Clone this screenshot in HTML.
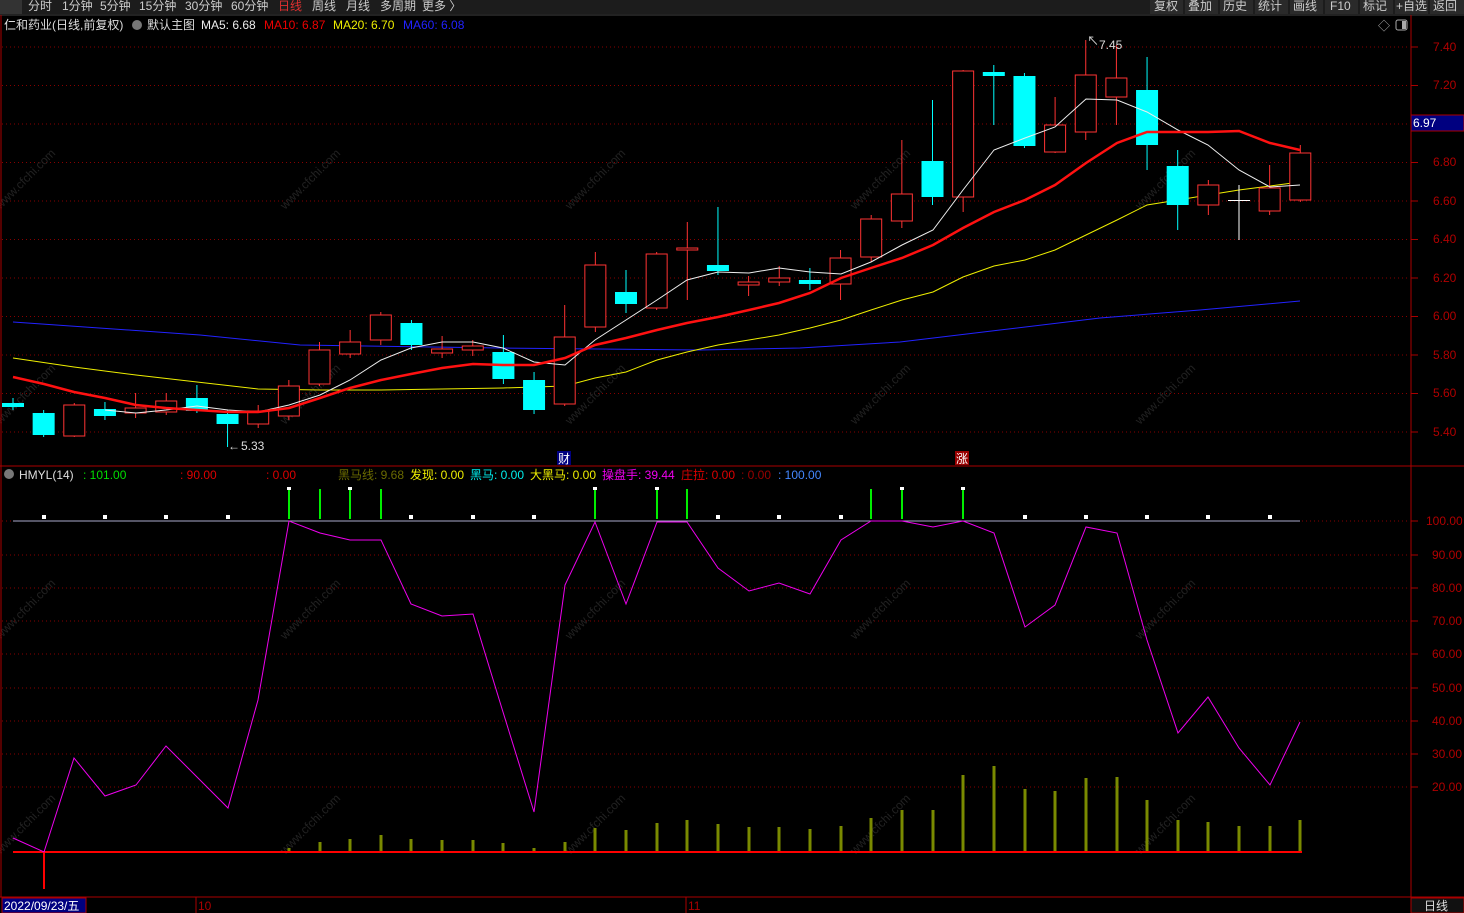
<!DOCTYPE html>
<html><head><meta charset="utf-8">
<style>
html,body{margin:0;padding:0;background:#000;width:1464px;height:913px;overflow:hidden;font-family:"Liberation Sans","Noto Sans CJK SC",sans-serif;}
svg{position:absolute;left:0;top:0;overflow:hidden}
text{font-family:"Liberation Sans","Noto Sans CJK SC",sans-serif;font-size:12px}
</style></head><body>
<svg id="s" width="1464" height="913" viewBox="0 0 1464 913" xmlns="http://www.w3.org/2000/svg">
<rect x="0" y="0" width="1464" height="14" fill="#1c1c1c"/>
<rect x="0" y="0" width="22" height="14" fill="#333"/>
<text x="28" y="10" fill="#ccc">分时</text><text x="62" y="10" fill="#ccc">1分钟</text><text x="100" y="10" fill="#ccc">5分钟</text><text x="139" y="10" fill="#ccc">15分钟</text><text x="185" y="10" fill="#ccc">30分钟</text><text x="231" y="10" fill="#ccc">60分钟</text><text x="278" y="10" fill="#e03030">日线</text><text x="312" y="10" fill="#ccc">周线</text><text x="346" y="10" fill="#ccc">月线</text><text x="380" y="10" fill="#ccc">多周期</text><text x="422" y="10" fill="#ccc">更多 〉</text>
<g fill="#2a2a2a"><rect x="1150" y="0" width="33" height="14"/><rect x="1185" y="0" width="33" height="14"/><rect x="1220" y="0" width="33" height="14"/><rect x="1255" y="0" width="33" height="14"/><rect x="1290" y="0" width="33" height="14"/><rect x="1325" y="0" width="33" height="14"/><rect x="1360" y="0" width="33" height="14"/><rect x="1395" y="0" width="33" height="14"/><rect x="1430" y="0" width="34" height="14"/></g>
<text x="1154" y="10" fill="#ccc">复权</text><text x="1188" y="10" fill="#ccc">叠加</text><text x="1223" y="10" fill="#ccc">历史</text><text x="1258" y="10" fill="#ccc">统计</text><text x="1293" y="10" fill="#ccc">画线</text><text x="1330" y="10" fill="#ccc">F10</text><text x="1363" y="10" fill="#ccc">标记</text><text x="1396" y="10" fill="#ccc">+自选</text><text x="1433" y="10" fill="#ccc">返回</text>
<line x1="0" y1="15" x2="1464" y2="15" stroke="#444"/>
<text x="4" y="29" fill="#ddd">仁和药业(日线,前复权)</text>
<circle cx="137" cy="25" r="5" fill="#777"/>
<text x="147" y="29" fill="#ddd">默认主图</text>
<text x="201" y="29" fill="#eee">MA5: 6.68</text>
<text x="264" y="29" fill="#e00">MA10: 6.87</text>
<text x="333" y="29" fill="#ee0">MA20: 6.70</text>
<text x="403" y="29" fill="#22f">MA60: 6.08</text>
<text x="1378" y="30" fill="#aaa">◇</text>
<rect x="1396" y="20" width="11" height="10" rx="2" fill="none" stroke="#aaa"/><rect x="1402" y="21" width="4" height="8" fill="#aaa"/>
<g id="grid"></g>
<g id="wm" fill="#222"></g>
<line x1="1411" y1="15" x2="1411" y2="897" stroke="#a00"/>
<line x1="0" y1="466" x2="1464" y2="466" stroke="#a00"/>
<line x1="1" y1="15" x2="1" y2="897" stroke="#a00"/>
<g id="main"></g>
<rect x="1411" y="115" width="53" height="16" fill="#000080" stroke="#a00"/>
<text x="1413" y="127" fill="#fff">6.97</text>
<text x="1099" y="49" fill="#ddd">7.45</text><text x="1087" y="45" fill="#ddd">↖</text>
<text x="241" y="450" fill="#ddd">5.33</text><text x="228" y="450" fill="#ddd">←</text>
<rect x="557" y="451" width="14" height="14" fill="#000080"/><text x="558" y="463" fill="#fff">财</text>
<rect x="955" y="451" width="14" height="14" fill="#900"/><text x="956" y="463" fill="#fff">涨</text>
<circle cx="9" cy="474" r="5" fill="#777"/>
<text x="19" y="479" fill="#ddd">HMYL(14)</text>
<text x="83" y="479" fill="#0d0">: 101.00</text>
<text x="180" y="479" fill="#d00">: 90.00</text>
<text x="266" y="479" fill="#d00">: 0.00</text>
<text x="338" y="479" fill="#6a6a00">黑马线: 9.68</text>
<text x="410" y="479" fill="#ee0">发现: 0.00</text>
<text x="470" y="479" fill="#0ee">黑马: 0.00</text>
<text x="530" y="479" fill="#ee0">大黑马: 0.00</text>
<text x="602" y="479" fill="#e0e">操盘手: 39.44</text>
<text x="681" y="479" fill="#d00">庄拉: 0.00</text>
<text x="741" y="479" fill="#900">: 0.00</text>
<text x="778" y="479" fill="#48f">: 100.00</text>
<g id="ind"></g>
<rect x="0" y="897" width="1464" height="16" fill="#000"/>
<line x1="0" y1="897" x2="1464" y2="897" stroke="#a00"/>
<rect x="2" y="898" width="84" height="15" fill="#000080" stroke="#a00"/>
<text x="4" y="910" fill="#fff">2022/09/23/五</text>
<line x1="196" y1="897" x2="196" y2="913" stroke="#a00"/><text x="198" y="910" fill="#a00">10</text>
<line x1="686" y1="897" x2="686" y2="913" stroke="#a00"/><text x="688" y="910" fill="#a00">11</text>
<rect x="1411" y="898" width="53" height="15" fill="#111" stroke="#a00"/><text x="1424" y="910" fill="#ddd">日线</text>
<g id="lbl" fill="#b00000">
<text x="1433" y="51">7.40</text><text x="1433" y="89">7.20</text><text x="1433" y="166">6.80</text><text x="1433" y="205">6.60</text><text x="1433" y="243">6.40</text><text x="1433" y="282">6.20</text><text x="1433" y="320">6.00</text><text x="1433" y="359">5.80</text><text x="1433" y="397">5.60</text><text x="1433" y="436">5.40</text>
<text x="1426" y="525">100.00</text><text x="1432" y="559">90.00</text><text x="1432" y="592">80.00</text><text x="1432" y="625">70.00</text><text x="1432" y="658">60.00</text><text x="1432" y="692">50.00</text><text x="1432" y="725">40.00</text><text x="1432" y="758">30.00</text><text x="1432" y="791">20.00</text>
</g>
</svg>
<script>
const NS="http://www.w3.org/2000/svg";
function el(p,t,a){const e=document.createElementNS(NS,t);for(const k in a)e.setAttribute(k,a[k]);document.getElementById(p).appendChild(e);return e;}
const grid=[47,85.5,124,162.5,201,239.5,278,316.5,355,393.5,432,521,555,588,621,654,688,721,754,787];
grid.forEach(y=>{el("grid","line",{x1:2,y1:y,x2:1410,y2:y,stroke:"#800",'stroke-dasharray':"1 3"});el("grid","line",{x1:1411,y1:y,x2:1418,y2:y,stroke:"#a00"});});
for(let gx=0;gx<1420;gx+=285)for(let gy=210;gy<900;gy+=215){const t=el("wm","text",{x:gx,y:gy,transform:`rotate(-45 ${gx} ${gy})`,'font-size':24});t.textContent="www.cfchi.com";}
const X=i=>13+i*30.65;
const C=[["c",403,407,398,410],["c",413,435,410,437],["r",405,436,403,437],["c",409,416,402,420],["r",408,413,393,418],["r",401,412,393,415],["c",398,411,385,413],["c",414,424,410,447],["r",411,424,405,428],["r",386,416,380,420],["r",350,384,342,386],["r",342,354,330,358],["r",315,340,312,345],["c",323,345,320,350],["r",349,353,336,358],["r",346,350,340,356],["c",352,379,335,384],["c",380,410,372,414],["r",337,404,305,406],["r",265,327,252,332],["c",292,304,270,313],["r",254,308,252,310],["r",248,250,222,300],["c",265,271,207,275],["r",282,285,276,296],["r",278,282,266,286],["c",280,284,268,290],["r",258,284,250,300],["r",219,257,215,262],["r",194,221,140,228],["c",161,197,100,205],["r",71,197,70,212],["c",72,76,65,125],["c",76,146,73,148],["r",125,152,97,153],["r",75,132,40,140],["r",78,97,45,125],["c",90,145,57,170],["c",166,205,150,230],["r",185,205,180,215],["w",200,201,185,240],["r",188,211,165,215],["r",153,200,145,202]];
function pl(id,pts,col,w){el(id,"polyline",{points:pts.map(p=>p.join(",")).join(" "),fill:"none",stroke:col,'stroke-width':w});}
pl("main",[[13,322],[200,335],[300,345],[500,348],[700,350],[800,348],[900,342],[1000,330],[1100,318],[1200,310],[1300,301]],"#22f",1);
pl("main",[[13,358],[74,367],[136,375],[197,382],[258,389],[320,390],[381,390],[442,389],[503,388],[565,386],[595,378],[626,372],[657,360],[687,352],[718,345],[749,340],[779,335],[810,328],[841,320],[871,310],[902,300],[933,292],[963,277],[994,266],[1025,260],[1055,250],[1086,235],[1117,220],[1147,205],[1178,200],[1208,195],[1239,190],[1270,186],[1300,182]],"#ee0",1);
C.forEach((c,i)=>{const x=X(i),col=c[0]=="r"?"#f33":c[0]=="c"?"#0ff":"#fff";
el("main","line",{x1:x,y1:c[3],x2:x,y2:c[1],stroke:col});el("main","line",{x1:x,y1:c[2],x2:x,y2:c[4],stroke:col});
if(c[0]=="r")el("main","rect",{x:x-10.5,y:c[1],width:21,height:Math.max(1,c[2]-c[1]),fill:"#000",stroke:col});
else el("main","rect",{x:x-11,y:c[1],width:22,height:Math.max(1,c[2]-c[1]),fill:col});});
pl("main",[[105,410],[136,413],[166,410],[197,406],[228,410],[258,412],[289,405],[320,395],[350,380],[381,360],[411,348],[442,342],[473,342],[503,348],[534,362],[565,365],[595,340],[626,320],[657,300],[687,280],[718,272],[749,273],[779,268],[810,272],[841,274],[871,262],[902,245],[933,230],[963,190],[994,150],[1025,138],[1055,127],[1086,99],[1117,100],[1147,112],[1178,130],[1208,145],[1239,170],[1270,187],[1300,185]],"#eee",1);
pl("main",[[13,377],[44,384],[74,392],[105,398],[136,405],[166,408],[197,410],[228,412],[258,412],[289,408],[320,398],[350,388],[381,380],[411,374],[442,368],[473,364],[503,365],[534,365],[565,358],[595,345],[626,338],[657,330],[687,323],[718,317],[749,310],[779,303],[810,293],[841,278],[871,268],[902,258],[933,245],[963,228],[994,212],[1025,200],[1055,185],[1086,163],[1117,143],[1147,132],[1178,132],[1208,132],[1239,131],[1270,143],[1300,150]],"#f11",2.5);
el("ind","line",{x1:13,y1:521,x2:1300,y2:521,stroke:"#aac",'stroke-width':1});
[289,320,350,381,595,657,687,871,902,963].forEach(x=>el("ind","line",{x1:x,y1:489,x2:x,y2:519,stroke:"#0e0",'stroke-width':2}));
[289,350,595,657,902,963].forEach(x=>el("ind","rect",{x:x-2,y:487,width:4,height:3,fill:"#fff"}));
[44,105,166,228,411,473,534,718,779,841,1025,1086,1147,1208,1270].forEach(x=>el("ind","rect",{x:x-2,y:515,width:4,height:4,fill:"#fff"}));
const ob=[[289,848],[320,842],[350,839],[381,835],[411,839],[442,840],[473,840],[503,843],[534,848],[565,842],[595,828],[626,830],[657,823],[687,820],[718,824],[749,827],[779,827],[810,829],[841,826],[871,818],[902,810],[933,810],[963,775],[994,766],[1025,789],[1055,791],[1086,778],[1117,777],[1147,800],[1178,820],[1208,822],[1239,826],[1270,826],[1300,820]];
ob.forEach(o=>el("ind","line",{x1:o[0],y1:o[1],x2:o[0],y2:852,stroke:"#7a8a00",'stroke-width':3}));
el("ind","line",{x1:13,y1:852,x2:1302,y2:852,stroke:"#f00",'stroke-width':2});
el("ind","line",{x1:44,y1:852,x2:44,y2:889,stroke:"#f00",'stroke-width':2});
pl("ind",[[13,838],[44,852],[74,758],[105,796],[136,785],[166,746],[197,777],[228,808],[258,700],[289,521],[320,533],[350,540],[381,540],[411,604],[442,616],[473,614],[503,712],[534,812],[565,585],[595,522],[626,604],[657,522],[687,522],[718,568],[749,591],[779,583],[810,594],[841,540],[871,521],[902,521],[933,527],[963,521],[994,533],[1025,627],[1055,605],[1086,527],[1117,533],[1147,640],[1178,733],[1208,697],[1239,748],[1270,785],[1300,722]],"#e0e",1);
</script>
</body></html>
